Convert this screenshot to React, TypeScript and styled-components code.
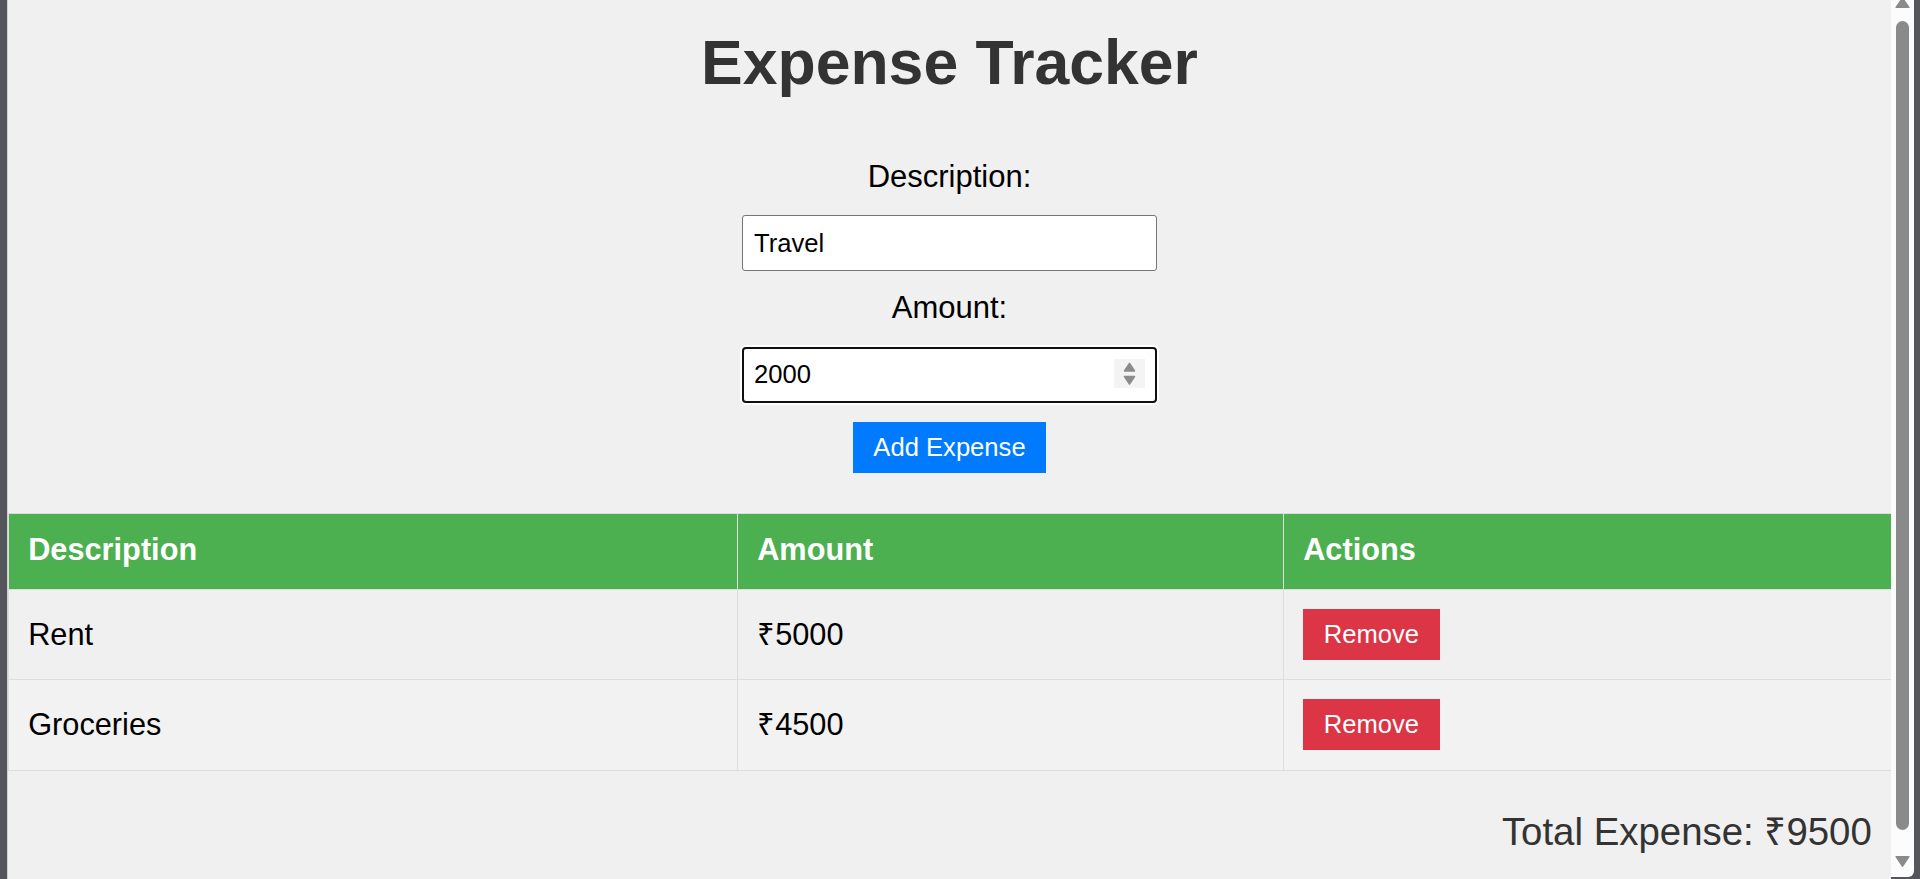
import React from "react";
import styled, { createGlobalStyle } from "styled-components";

const GlobalStyle = createGlobalStyle`
  html, body {
    margin: 0;
    padding: 0;
    overflow: hidden;
    font-family: "Liberation Sans", Arial, sans-serif;
  }
  * { box-sizing: border-box; }
`;

const Frame = styled.div`
  display: flex;
  height: 100vh;
  background: #55565b;
  padding-left: 7px;
  padding-right: 6px;
`;

const Main = styled.main`
  flex: 1;
  min-width: 0;
  background: #f0f0f0;
  border-left: 1px solid #cfcfcf;
  display: flex;
  flex-direction: column;
  align-items: center;
  overflow: hidden;
`;

const Title = styled.h1`
  margin: 25px 0 0;
  font-size: 62.5px;
  line-height: 74px;
  font-weight: 700;
  color: #333;
`;

const Form = styled.form`
  display: flex;
  flex-direction: column;
  align-items: center;
  margin-top: 59.5px;
`;

const Label = styled.label`
  font-size: 31px;
  line-height: 35px;
  color: #000;
  margin-bottom: 21.5px;
`;

const TextInput = styled.input`
  width: 415px;
  height: 56px;
  border: 1px solid #767676;
  border-radius: 3px;
  padding: 0 11px;
  font-family: inherit;
  font-size: 25.6px;
  color: #000;
  background: #fff;
  margin-bottom: 19.2px;
  outline: none;
`;

const NumberField = styled.div`
  position: relative;
  width: 415px;
  height: 56px;
  margin-bottom: 19.5px;
`;

const NumberInput = styled.input`
  width: 100%;
  height: 100%;
  border: 2px solid #101010;
  border-radius: 4px;
  box-shadow: 0 0 0 2px #ffffff;
  padding: 0 50px 0 10px;
  font-family: inherit;
  font-size: 25.6px;
  color: #000;
  background: #fff;
  outline: none;
`;

const Spinner = styled.svg`
  position: absolute;
  right: 12px;
  top: 12.5px;
  width: 31px;
  height: 29px;
`;

const ActionButton = styled.button<{ $tone: "primary" | "danger" }>`
  background: ${(p) => (p.$tone === "primary" ? "#007bff" : "#dc3545")};
  color: #fff;
  border: none;
  border-radius: 0;
  font-family: inherit;
  font-size: 25.6px;
  line-height: 29.4px;
  padding: 10.8px 20.5px;
  cursor: pointer;
`;

const Table = styled.table`
  align-self: stretch;
  width: 100%;
  table-layout: fixed;
  border-collapse: collapse;
  margin-top: 39.7px;
  font-size: 30.72px;
`;

const Col = styled.col<{ $w: number }>`
  width: ${(p) => p.$w}px;
`;

const HeadCell = styled.th`
  background: #4caf50;
  color: #fff;
  text-align: left;
  font-weight: 700;
  line-height: 35px;
  padding: 18.4px 19.2px 21.5px;
  border: 1px solid #ddd;
`;

const Row = styled.tr`
  &:nth-child(even) {
    background: #f2f2f2;
  }
`;

const Cell = styled.td`
  color: #000;
  line-height: 35px;
  padding: 19.2px;
  border: 1px solid #ddd;
  vertical-align: middle;
`;

const Total = styled.p`
  align-self: stretch;
  margin: 39px 0 0;
  padding: 0 19.2px;
  text-align: right;
  font-size: 38.4px;
  line-height: 44px;
  color: #333;
`;

const ScrollBar = styled.div`
  width: 23px;
  margin-bottom: 2px;
  background: #fcfcfc;
  border-bottom-right-radius: 6px;
  display: flex;
  flex-direction: column;
  align-items: center;
`;

const UpArrow = styled.svg`
  width: 15px;
  height: 8px;
  display: block;
`;

const Thumb = styled.div`
  margin-top: 13px;
  width: 13px;
  height: 809px;
  border-radius: 6.5px;
  background: #8a8a8a;
`;

const DownArrow = styled.svg`
  margin-top: 26px;
  width: 15px;
  height: 11px;
  display: block;
`;

const expenses = [
  { id: 1, description: "Rent", amount: 5000 },
  { id: 2, description: "Groceries", amount: 4500 },
];

export default function App() {
  const total = expenses.reduce((s, e) => s + e.amount, 0);
  return (
    <>
      <GlobalStyle />
      <Frame>
        <Main>
          <Title>Expense Tracker</Title>
          <Form onSubmit={(e) => e.preventDefault()}>
            <Label htmlFor="desc">Description:</Label>
            <TextInput id="desc" type="text" defaultValue="Travel" />
            <Label htmlFor="amount">Amount:</Label>
            <NumberField>
              <NumberInput id="amount" type="text" defaultValue="2000" />
              <Spinner viewBox="0 0 31 29">
                <rect x="0" y="0" width="31" height="29" fill="#f4f4f4" />
                <polygon
                  points="10.5,12 20.5,12 15.5,4.5"
                  fill="#8c8c8c"
                  stroke="#8c8c8c"
                  strokeWidth="1.6"
                  strokeLinejoin="round"
                />
                <polygon
                  points="10.5,17.5 20.5,17.5 15.5,25"
                  fill="#8c8c8c"
                  stroke="#8c8c8c"
                  strokeWidth="1.6"
                  strokeLinejoin="round"
                />
              </Spinner>
            </NumberField>
            <ActionButton $tone="primary" type="submit">
              Add Expense
            </ActionButton>
          </Form>
          <Table>
            <colgroup>
              <Col $w={729} />
              <Col $w={546} />
              <Col $w={608} />
            </colgroup>
            <thead>
              <tr>
                <HeadCell>Description</HeadCell>
                <HeadCell>Amount</HeadCell>
                <HeadCell>Actions</HeadCell>
              </tr>
            </thead>
            <tbody>
              {expenses.map((e) => (
                <Row key={e.id}>
                  <Cell>{e.description}</Cell>
                  <Cell>₹{e.amount}</Cell>
                  <Cell>
                    <ActionButton $tone="danger" type="button">
                      Remove
                    </ActionButton>
                  </Cell>
                </Row>
              ))}
            </tbody>
          </Table>
          <Total>Total Expense: ₹{total}</Total>
        </Main>
        <ScrollBar>
          <UpArrow viewBox="0 0 15 8">
            <polygon
              points="1,7.3 14,7.3 7.5,-2"
              fill="#8a8a8a"
              stroke="#8a8a8a"
              strokeWidth="1.2"
              strokeLinejoin="round"
            />
          </UpArrow>
          <Thumb />
          <DownArrow viewBox="0 0 15 11">
            <polygon
              points="1,0.7 14,0.7 7.5,10.3"
              fill="#8a8a8a"
              stroke="#8a8a8a"
              strokeWidth="1.2"
              strokeLinejoin="round"
            />
          </DownArrow>
        </ScrollBar>
      </Frame>
    </>
  );
}
